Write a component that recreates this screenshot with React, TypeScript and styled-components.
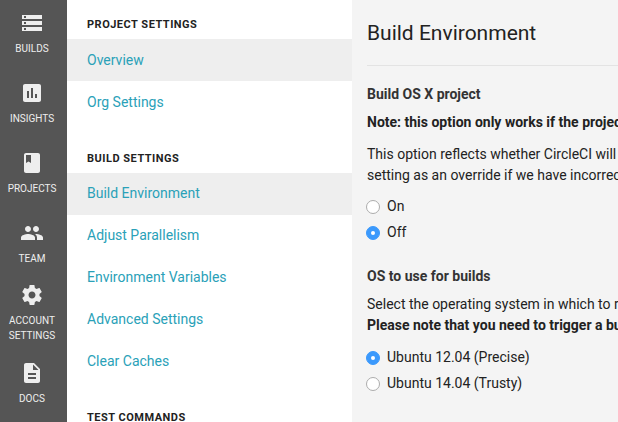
import React from "react";
import styled, { createGlobalStyle } from "styled-components";

const GlobalStyle = createGlobalStyle`
  * { box-sizing: border-box; }
  body { margin: 0; overflow: hidden; font-family: Roboto, "Liberation Sans", sans-serif; font-size: 14px; color: #222; }
  h1, h2, h3, p, ul { margin: 0; padding: 0; }
`;

const Page = styled.div`
  display: grid;
  grid-template-columns: 67px 285px 1fr;
  width: 100vw;
  height: 100vh;
  overflow: hidden;
`;

const Rail = styled.nav`
  overflow: hidden;
  background: #555;
  color: #eee;
`;

const RailList = styled.div`
  display: flex;
  flex-direction: column;
  width: 64px;
  margin-top: -1px;
`;

const RailItem = styled.a<{ $tall?: boolean }>`
  display: flex;
  flex: none;
  flex-direction: column;
  align-items: center;
  justify-content: center;
  height: 70px;
  padding-bottom: ${(p) => (p.$tall ? "3px" : "1px")};
`;

const RailIcon = styled.svg`
  width: 24px;
  height: 24px;
  margin-bottom: 6px;
  fill: currentColor;
`;

const RailLabel = styled.span`
  width: 58px;
  font-size: 10px;
  line-height: 15px;
  text-align: center;
`;

const Menu = styled.aside`
  overflow: hidden;
  background: #fff;
`;

const MenuHeading = styled.h3`
  height: 30px;
  padding-left: 20px;
  font-size: 11px;
  font-weight: 700;
  line-height: 32px;
  letter-spacing: 0.5px;
`;

const MenuLink = styled.a<{ $active?: boolean }>`
  display: block;
  height: 42px;
  padding-left: 20px;
  line-height: 42px;
  color: #2aa1b8;
  background: ${(p) => (p.$active ? "#eee" : "transparent")};
`;

const MenuGroup = styled.section`
  &:first-child { margin-top: 9px; }
  & + & { margin-top: 20px; }
  & + & ${MenuLink} { line-height: 40px; }
  &:last-child { margin-top: 19px; }
`;

const Main = styled.main`
  overflow: hidden;
  padding-left: 15px;
  background: #f4f4f4;
`;

const Title = styled.h1`
  height: 66px;
  border-bottom: 1px solid #e3e3e3;
  font-size: 21px;
  font-weight: 400;
  line-height: 66px;
`;

const Options = styled.div`
  display: flex;
  flex-direction: column;
  padding-top: 7px;
`;

const Setting = styled.section`
  padding-top: 18px;
  & + & { padding-top: 21px; }
  & + & ${Options} { padding-top: 8px; }
`;

const SettingTitle = styled.h2`
  margin-bottom: 7px;
  color: #333;
  font-size: 14px;
  font-weight: 700;
  line-height: 21px;
`;

const Text = styled.p<{ $spaced?: boolean }>`
  margin-bottom: ${(p) => (p.$spaced ? "11px" : "0")};
  line-height: 21px;
  white-space: nowrap;
`;

const Option = styled.label`
  display: flex;
  align-items: center;
  height: 26px;
  margin-left: -1px;
`;

const Radio = styled.span<{ $checked?: boolean }>`
  display: grid;
  place-items: center;
  width: 14px;
  height: 14px;
  margin: 1px 7px 0 0;
  border: 1px solid ${(p) => (p.$checked ? "#3b99fc" : "#acacac")};
  border-radius: 50%;
  background: ${(p) => (p.$checked ? "#3b99fc" : "#fff")};

  &::after {
    width: 4px;
    height: 4px;
    border-radius: 50%;
    background: #fff;
    content: "";
  }
`;

const railItems = [
  { label: "BUILDS", path: "M2 20h20v-4H2v4zm2-3h2v2H4v-2zM2 4v4h20V4H2zm4 3H4V5h2v2zm-4 7h20v-4H2v4zm2-3h2v2H4v-2z" },
  { label: "INSIGHTS", path: "M19 3H5c-1.1 0-2 .9-2 2v14c0 1.1.9 2 2 2h14c1.1 0 2-.9 2-2V5c0-1.1-.9-2-2-2zM9 17H7v-7h2v7zm4 0h-2V7h2v10zm4 0h-2v-4h2v4z" },
  { label: "PROJECTS", path: "M18 2H6c-1.1 0-2 .9-2 2v16c0 1.1.9 2 2 2h12c1.1 0 2-.9 2-2V4c0-1.1-.9-2-2-2zM6 4h5v8l-2.500-1.500L6 12V4z" },
  { label: "TEAM", path: "M16 11c1.660 0 2.990-1.340 2.990-3S17.660 5 16 5c-1.660 0-3 1.340-3 3s1.340 3 3 3zm-8 0c1.660 0 2.990-1.340 2.990-3S9.660 5 8 5C6.340 5 5 6.340 5 8s1.340 3 3 3zm0 2c-2.330 0-7 1.170-7 3.500V19h14v-2.500c0-2.330-4.670-3.500-7-3.500zm8 0c-.29 0-.62.02-.97.05 1.160.84 1.970 1.970 1.970 3.450V19h6v-2.500c0-2.330-4.670-3.500-7-3.500z" },
  { label: "ACCOUNT SETTINGS", tall: true, path: "M19.430 12.980c.04-.32.07-.64.07-.98s-.03-.66-.07-.98l2.110-1.650c.19-.15.24-.42.12-.64l-2-3.460c-.12-.22-.39-.3-.61-.22l-2.490 1c-.52-.4-1.080-.73-1.690-.98l-.38-2.650C14.460 2.180 14.250 2 14 2h-4c-.25 0-.46.18-.49.42l-.38 2.650c-.61.25-1.170.59-1.690.98l-2.490-1c-.23-.09-.49 0-.61.22l-2 3.460c-.13.22-.07.49.12.64l2.110 1.650c-.04.32-.07.65-.07.98s.03.66.07.98l-2.110 1.650c-.19.15-.24.42-.12.64l2 3.460c.12.22.39.3.61.22l2.490-1c.52.4 1.080.73 1.690.98l.38 2.650c.03.24.24.42.49.42h4c.25 0 .46-.18.49-.42l.38-2.650c.61-.25 1.170-.59 1.690-.98l2.490 1c.23.09.49 0 .61-.22l2-3.460c.12-.22.07-.49-.12-.64l-2.110-1.650zM12 15.500c-1.930 0-3.500-1.570-3.500-3.500s1.570-3.500 3.500-3.500 3.500 1.570 3.500 3.500-1.570 3.500-3.500 3.500z" },
  { label: "DOCS", path: "M14 2H6c-1.100 0-1.990.9-1.990 2L4 20c0 1.100.89 2 1.990 2H18c1.100 0 2-.9 2-2V8l-6-6zm2 16H8v-2h8v2zm0-4H8v-2h8v2zm-3-5V3.500L18.500 9H13z" },
];

const menuGroups = [
  { heading: "PROJECT SETTINGS", links: ["Overview", "Org Settings"], active: "Overview" },
  {
    heading: "BUILD SETTINGS",
    links: ["Build Environment", "Adjust Parallelism", "Environment Variables", "Advanced Settings", "Clear Caches"],
    active: "Build Environment",
  },
  { heading: "TEST COMMANDS", links: [], active: "" },
];

function RadioOption({ label, checked }: { label: string; checked?: boolean }) {
  return (
    <Option>
      <Radio $checked={checked} />
      {label}
    </Option>
  );
}

export default function App() {
  return (
    <>
      <GlobalStyle />
      <Page>
        <Rail>
          <RailList>
            {railItems.map((item) => (
              <RailItem key={item.label} $tall={item.tall}>
                <RailIcon viewBox="0 0 24 24"><path d={item.path} /></RailIcon>
                <RailLabel>{item.label}</RailLabel>
              </RailItem>
            ))}
          </RailList>
        </Rail>
        <Menu>
          {menuGroups.map((group) => (
            <MenuGroup key={group.heading}>
              <MenuHeading>{group.heading}</MenuHeading>
              {group.links.map((link) => (
                <MenuLink key={link} $active={link === group.active}>{link}</MenuLink>
              ))}
            </MenuGroup>
          ))}
        </Menu>
        <Main>
          <Title>Build Environment</Title>
          <Setting>
            <SettingTitle>Build OS X project</SettingTitle>
            <Text $spaced><b>Note: this option only works if the project</b></Text>
            <Text>This option reflects whether CircleCI will<br />setting as an override if we have incorrectly</Text>
            <Options>
              <RadioOption label="On" />
              <RadioOption label="Off" checked />
            </Options>
          </Setting>
          <Setting>
            <SettingTitle>OS to use for builds</SettingTitle>
            <Text>Select the operating system in which to run<br /><b>Please note that you need to trigger a build</b></Text>
            <Options>
              <RadioOption label="Ubuntu 12.04 (Precise)" checked />
              <RadioOption label="Ubuntu 14.04 (Trusty)" />
            </Options>
          </Setting>
        </Main>
      </Page>
    </>
  );
}
